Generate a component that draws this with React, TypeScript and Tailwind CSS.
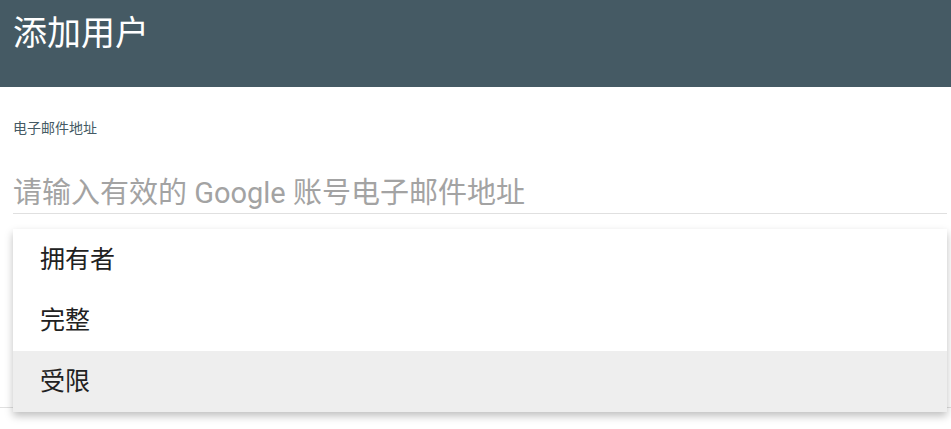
import React from 'react';

type Role = {
  label: string;
  active?: boolean;
};

const roles: Role[] = [
  { label: '拥有者' },
  { label: '完整' },
  { label: '受限', active: true },
];

export default function App() {
  return (
    <div
      className="relative w-[951px] h-[429px] overflow-hidden bg-white"
      style={{ fontFamily: 'Roboto, "Noto Sans CJK SC", sans-serif' }}
    >
      <div className="h-[87px] bg-[#455a64] px-[13px] pt-[16px]">
        <h1 className="text-[34px] leading-none text-white">添加用户</h1>
      </div>

      <div className="pl-[13px] pr-[4px] pt-[34px]">
        <div className="text-[14px] leading-none text-[#455a64]">电子邮件地址</div>
        <div className="mt-[43px] border-b border-[#e0e0e0] pb-[5px]">
          <div className="text-[29px] leading-[30px] text-[#a3a3a3]">
            请输入有效的 Google 账号电子邮件地址
          </div>
        </div>
      </div>

      <div className="mt-[193px] border-b border-[#e0e0e0]" />

      {/* dropdown menu over the form */}
      <div className="absolute left-[13px] top-[229px] w-[934px] bg-white shadow-[0_4px_8px_rgba(0,0,0,0.25)]">
        {roles.map((role) => (
          <div
            key={role.label}
            className={`h-[61px] flex items-center pl-[27px] text-[25px] text-[#212121] ${role.active ? 'bg-[#eeeeee]' : ''}`}
          >
            {role.label}
          </div>
        ))}
      </div>
    </div>
  );
}
